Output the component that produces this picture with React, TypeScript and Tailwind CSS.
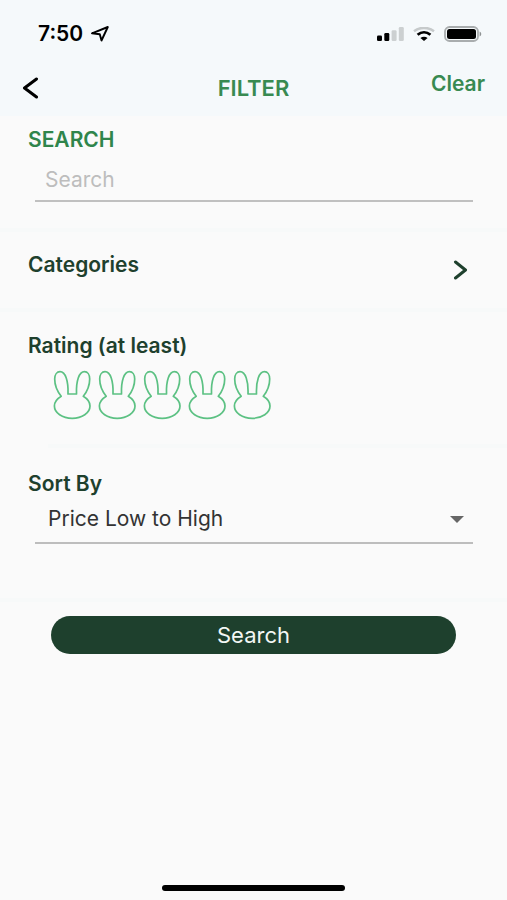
import React from 'react'

const SORT_OPTIONS = ['Price Low to High', 'Price High to Low', 'Top Rated', 'Newest']

const Bunny = ({ filled }: { filled: boolean }) => (
  <svg
    viewBox="0 0 38 50"
    className="h-[50px] w-[38px]"
    fill={filled ? '#5cc183' : 'none'}
    stroke="#5cc183"
    strokeWidth="1.7"
    strokeLinejoin="round"
  >
    <path d="M15 24H23.500C23 11 26 1.700 31.500 1.700C34.500 1.700 36.700 4.500 36.700 9C36.700 15 34.500 21 30.300 26.300C34.800 29 37 32 37 36C37 43 29 48.300 19.200 48.300S1.400 43 1.400 36C1.400 32 3.800 29 8.200 26.300C4 21 1.700 15 1.700 9C1.700 4.500 4 1.700 7 1.700C12.500 1.700 15.500 11 15 24Z" />
  </svg>
)

const StatusBar = () => (
  <div className="flex h-[68px] items-center justify-between pl-[38px] pr-[25px]">
    <div className="flex items-center gap-2">
      <span className="text-[21px] font-semibold leading-6 text-black">7:50</span>
      <svg viewBox="0 0 18 16" className="h-4 w-[18px]" fill="none" stroke="#000" strokeWidth="1.9" strokeLinejoin="round">
        <path d="M1 7.300L16.800 1L10.500 14.500L8.800 8.200Z" />
      </svg>
    </div>
    <div className="flex items-center gap-[9px]">
      <svg viewBox="0 0 27 14" className="h-[14px] w-[27px]">
        <rect x="0" y="8.500" width="5" height="5.500" rx="1.300" fill="#000" />
        <rect x="7.300" y="6" width="5" height="8" rx="1.300" fill="#000" />
        <rect x="14.600" y="3.200" width="5" height="10.800" rx="1.300" fill="#ccd0d1" />
        <rect x="21.800" y="0" width="5" height="14" rx="1.300" fill="#ccd0d1" />
      </svg>
      <svg viewBox="0 0 22 14" className="h-[14px] w-[22px]" fill="none">
        <path d="M1 4.200C6.500 -.200 15.500 -.200 21 4.200" stroke="#c6cacb" strokeWidth="2.500" />
        <path d="M4.600 7.700C8.400 4.500 13.600 4.500 17.400 7.700" stroke="#000" strokeWidth="2.800" />
        <path d="M7.400 11C9.600 9.200 12.400 9.200 14.600 11L11 14Z" fill="#000" />
      </svg>
      <svg viewBox="0 0 38 16" className="h-4 w-[38px]">
        <rect x="1" y="1" width="33" height="14" rx="4.500" fill="none" stroke="#a9adae" strokeWidth="1.800" />
        <rect x="3" y="3" width="29" height="10" rx="2.500" fill="#000" />
        <path d="M35.600 5.500C37.800 6.200 37.800 9.800 35.600 10.500Z" fill="#8f9394" />
      </svg>
    </div>
  </div>
)

const Divider = ({ className = '' }: { className?: string }) => (
  <div className={`h-1 bg-[#f7f9f9] ${className}`} />
)

export default function App() {
  const [query, setQuery] = React.useState('')
  const [rating, setRating] = React.useState(0)
  const [sort, setSort] = React.useState(SORT_OPTIONS[0])

  const handleClear = () => {
    setQuery('')
    setRating(0)
    setSort(SORT_OPTIONS[0])
  }

  return (
    <div className="flex min-h-screen flex-col bg-[#fafafa] font-['Inter','Liberation_Sans',sans-serif] text-[#1e402d]">
      <header className="bg-[#f5f9fb] pb-2">
        <StatusBar />
        <div className="grid h-10 grid-cols-3 items-center px-[22px]">
          <button type="button" aria-label="Back" className="justify-self-start">
            <svg viewBox="0 0 17 22" className="h-[22px] w-[17px]" fill="none" stroke="#000" strokeWidth="3" strokeLinecap="round" strokeLinejoin="round">
              <path d="M14.500 2L2.500 11L14.500 20" />
            </svg>
          </button>
          <h1 className="justify-self-center text-[22px] font-semibold leading-6 text-[#388a51]">FILTER</h1>
          <button
            type="button"
            onClick={handleClear}
            className="justify-self-end pb-2 text-[21px] font-semibold leading-6 text-[#388a51]"
          >
            Clear
          </button>
        </div>
      </header>

      <main>
        {/* Search */}
        <section className="px-7 pb-[26px] pt-3">
          <label htmlFor="query" className="block text-[21px] font-semibold leading-6 text-[#2f854b]">
            SEARCH
          </label>
          <input
            id="query"
            type="text"
            placeholder="Search"
            value={query}
            onChange={(e) => setQuery(e.target.value)}
            className="ml-[7px] mt-1 block h-[46px] w-[calc(100%-13px)] rounded-none border-b-2 border-[#c0c0c0] bg-transparent px-[10px] pt-0.5 text-[21px] text-[#333] outline-none placeholder:text-[#bdbdbd]"
          />
        </section>
        <Divider />

        {/* Categories */}
        <button type="button" className="flex w-full items-center justify-between pb-7 pl-7 pr-[39px] pt-5 text-left">
          <span className="pb-0.5 text-[21px] font-semibold leading-6">Categories</span>
          <svg viewBox="0 0 15 20" className="mt-2 h-5 w-[15px]" fill="none" stroke="#1e402d" strokeWidth="3" strokeLinecap="round" strokeLinejoin="round">
            <path d="M2.500 2L12.500 10L2.500 18" />
          </svg>
        </button>
        <Divider />

        {/* Rating */}
        <fieldset className="px-7 pb-6 pt-[22px]">
          <legend className="float-left w-full text-[21px] font-semibold leading-6">Rating (at least)</legend>
          <div className="flex w-full gap-[7px] pl-[25px] pt-3">
            {[1, 2, 3, 4, 5].map((value) => (
              <label key={value} className="relative cursor-pointer">
                <input
                  type="radio"
                  name="rating"
                  value={value}
                  aria-label={`${value} of 5`}
                  checked={rating === value}
                  onChange={() => setRating(value)}
                  className="sr-only"
                />
                <Bunny filled={value <= rating} />
              </label>
            ))}
          </div>
        </fieldset>
        <Divider className="ml-12" />

        {/* Sort */}
        <section className="px-7 pb-[54px] pt-6">
          <label htmlFor="sort" className="block text-[21px] font-semibold leading-6">
            Sort By
          </label>
          <div className="relative ml-[7px] mr-[6px]">
            <select
              id="sort"
              value={sort}
              onChange={(e) => setSort(e.target.value)}
              className="block h-12 w-full appearance-none rounded-none border-b-2 border-[#bdbdbd] bg-transparent pl-[13px] pr-8 text-[21px] text-[#333] outline-none"
            >
              {SORT_OPTIONS.map((option) => (
                <option key={option}>{option}</option>
              ))}
            </select>
            <svg viewBox="0 0 14 7" className="pointer-events-none absolute right-[9px] top-5 h-[7px] w-[14px]" fill="#666">
              <path d="M0 0H14L7 7Z" />
            </svg>
          </div>
        </section>
        <Divider />

        <div className="px-[51px] pt-[14px]">
          <button type="button" className="h-[38px] w-full rounded-full bg-[#1e402d] text-[22px] leading-6 text-[#f3f7f4]">
            Search
          </button>
        </div>
      </main>

      <div className="mx-auto mb-[9px] mt-auto h-[6px] w-[36%] rounded-full bg-black" />
    </div>
  )
}
